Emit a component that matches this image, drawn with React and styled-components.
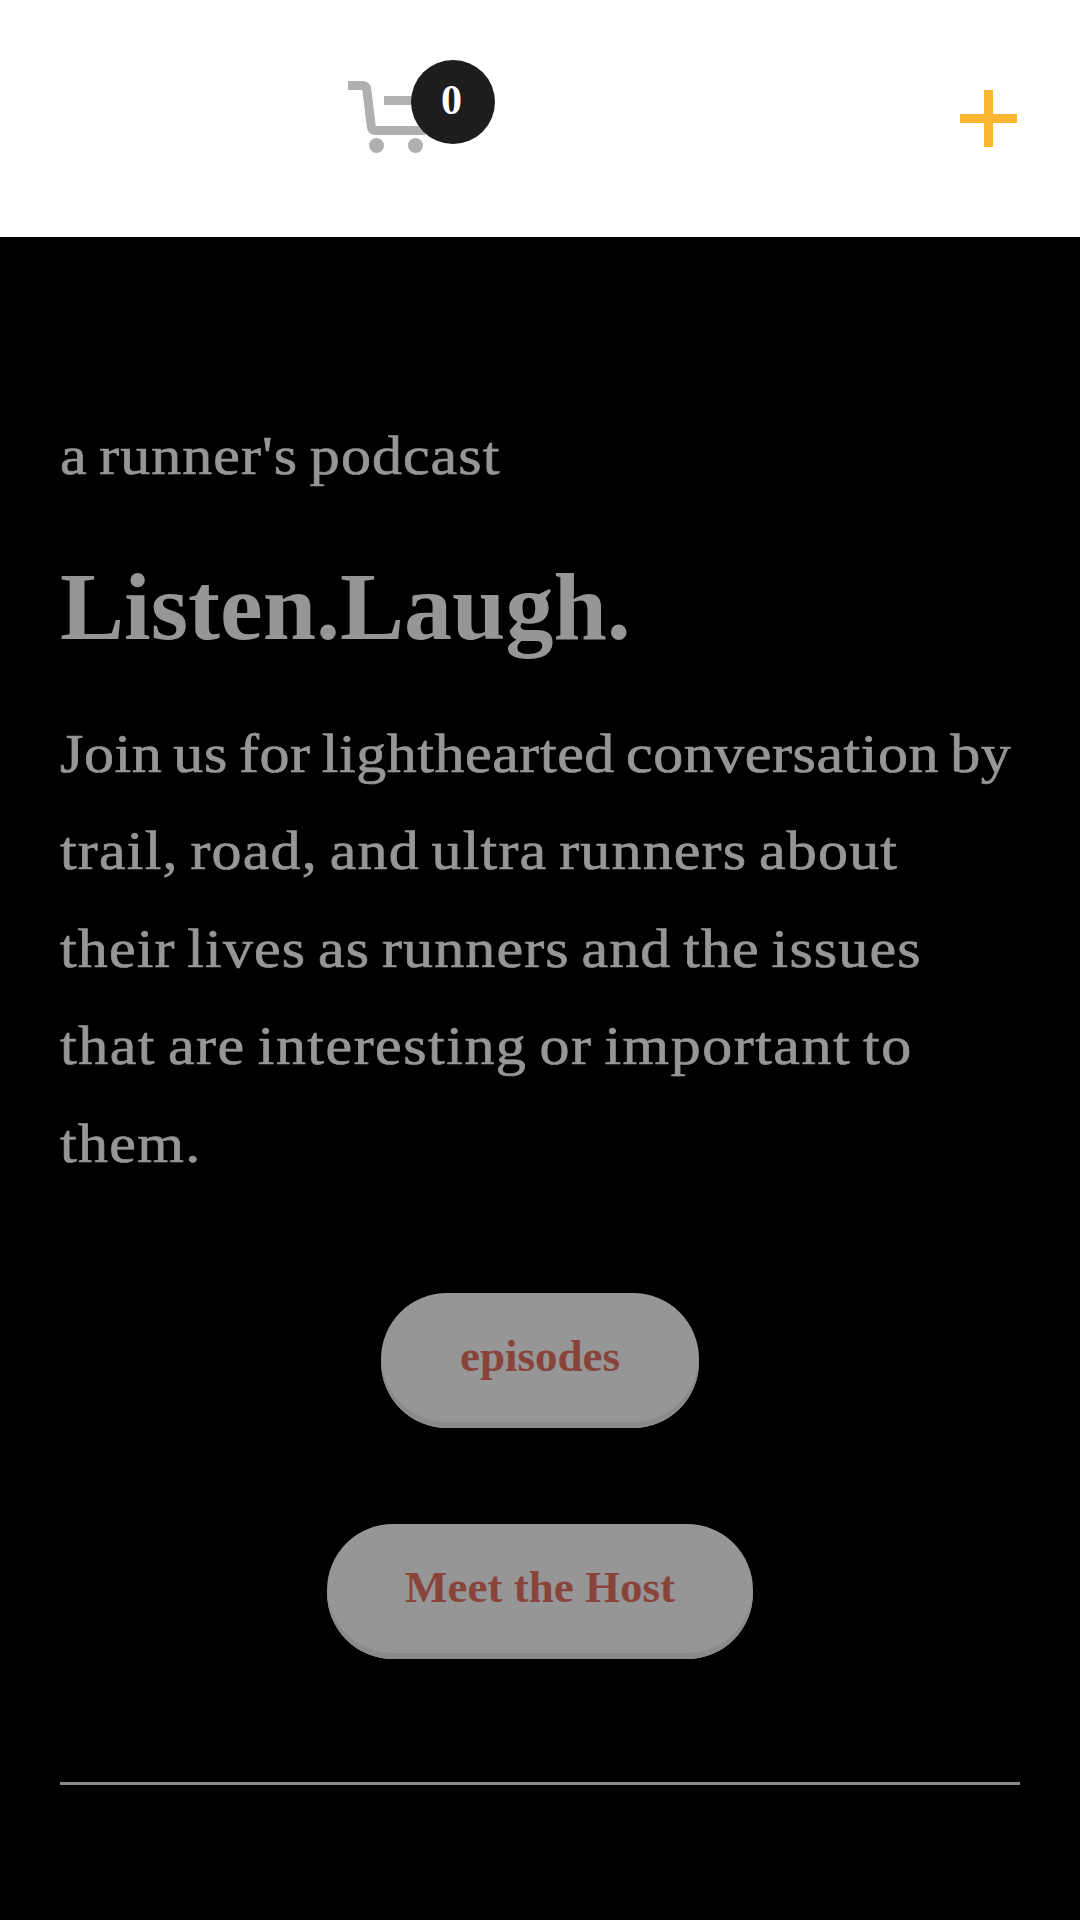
import styled, { createGlobalStyle } from "styled-components";

const GlobalStyle = createGlobalStyle`
  * {
    box-sizing: border-box;
  }
  body {
    margin: 0;
    background-color: #000;
    font-family: "Liberation Serif", "Times New Roman", serif;
  }
`;
const Page = styled.div`
  display: flex;
  flex-direction: column;
  width: 100%;
  min-height: 1920px;
  background-color: #000;
`;
const Header = styled.header`
  display: flex;
  align-items: flex-start;
  justify-content: space-between;
  height: 237px;
  padding: 60px 63px 0 348px;
  background-color: #fff;
`;
const Cart = styled.a`
  position: relative;
  width: 147px;
  height: 96px;
  padding-top: 21px;
`;
const CartIcon = styled.svg`
  display: block;
  width: 90px;
  height: 72px;
`;
const Badge = styled.span`
  position: absolute;
  top: 0;
  right: 0;
  display: flex;
  align-items: center;
  justify-content: center;
  width: 84px;
  height: 84px;
  padding: 0 3px 4px 0;
  border-radius: 50%;
  background-color: #1d1d1d;
  color: #fff;
  font-size: 42px;
  font-weight: 700;
  line-height: 1;
`;
const MenuIcon = styled.svg`
  width: 57px;
  height: 57px;
  margin-top: 30px;
`;
const Intro = styled.main`
  display: flex;
  flex-direction: column;
  padding: 171px 60px 0;
  color: #969696;
`;
/* the serif is stretched a little to get wider letters */
const Line = styled.span`
  display: block;
  width: fit-content;
  white-space: nowrap;
  word-spacing: -4px;
  letter-spacing: ${(props) => props.$tracking}px;
  transform: scaleX(1.11);
  transform-origin: left center;
`;
const Text = styled.p`
  margin: 0;
  font-size: 54px;
  line-height: 97.5px;
  -webkit-text-stroke: 0.7px #969696;
`;
const Title = styled.h1`
  margin: 43px 0 42px;
  font-size: 96px;
  font-weight: 700;
  line-height: 115px;
`;
const Buttons = styled.div`
  display: flex;
  flex-direction: column;
  align-items: center;
  gap: 96px;
  margin-top: 100px;
`;
const Button = styled.a`
  display: flex;
  align-items: center;
  justify-content: center;
  width: ${(props) => props.$width}px;
  height: 135px;
  padding-bottom: 8px;
  border-radius: 66px;
  background-color: #969696;
  box-shadow: inset 0 -6px 0 #8a8a8a;
  color: #88443a;
  font-size: 45px;
  font-weight: 700;
  line-height: 1;
  white-space: nowrap;
`;
const Divider = styled.hr`
  width: 100%;
  height: 3px;
  margin: 123px 0 0;
  border: none;
  background-color: #888;
`;

const description = [
  { text: "Join us for lighthearted conversation by", tracking: 0.52 },
  { text: "trail, road, and ultra runners about", tracking: 1.08 },
  { text: "their lives as runners and the issues", tracking: 1.04 },
  { text: "that are interesting or important to", tracking: 1.36 },
  { text: "them.", tracking: 1.2 },
];

export default function App() {
  return (
    <Page>
      <GlobalStyle />
      <Header>
        <Cart>
          <CartIcon viewBox="0 0 90 72" fill="none">
            <path
              d="M0 4.5H14Q18.2 4.5 18.8 8.7L23.3 45.5Q23.8 49.5 27.5 49.5H74Q78 49.5 79 45.5L84 19.5H36"
              stroke="#b0b0b0"
              strokeWidth="9"
            />
            <circle cx="28.5" cy="64.5" r="7.5" fill="#b0b0b0" />
            <circle cx="67.5" cy="64.5" r="7.5" fill="#b0b0b0" />
          </CartIcon>
          <Badge>0</Badge>
        </Cart>
        <MenuIcon viewBox="0 0 57 57">
          <path d="M24 0H33V24H57V33H33V57H24V33H0V24H24Z" fill="#fbb731" />
        </MenuIcon>
      </Header>
      <Intro>
        <Text>
          <Line $tracking={0.95}>a runner's podcast</Line>
        </Text>
        <Title>Listen.Laugh.</Title>
        <Text>
          {description.map((line) => (
            <Line key={line.text} $tracking={line.tracking}>
              {line.text}
            </Line>
          ))}
        </Text>
        <Buttons>
          <Button $width={318}>episodes</Button>
          <Button $width={426}>Meet the Host</Button>
        </Buttons>
        <Divider />
      </Intro>
    </Page>
  );
}
